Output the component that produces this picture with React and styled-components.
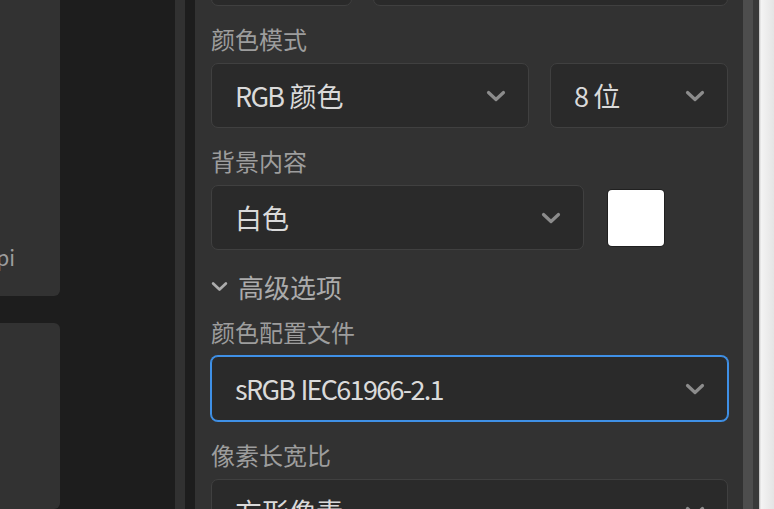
import React from "react";
import styled, { createGlobalStyle } from "styled-components";

const Global = createGlobalStyle`
  html, body { margin: 0; padding: 0; background: #1d1d1d; }
  body { font-family: "Noto Sans CJK SC", "Noto Sans", sans-serif; }
  #root { height: 509px; overflow: hidden; }
`;

const Screen = styled.div`
  display: flex;
  height: 509px;
  overflow: hidden;
  background: #1d1d1d;
`;

const LeftColumn = styled.div`
  width: 60px;
  flex-shrink: 0;
  display: flex;
  flex-direction: column;
  gap: 27px;
`;

const PreviewCard = styled.div`
  background: #323232;
  border-radius: 6px;
  margin-left: -10px;
  margin-top: ${(p) => (p.$first ? "-10px" : "0")};
  height: ${(p) => (p.$first ? "306px" : "auto")};
  flex: ${(p) => (p.$first ? "none" : "1")};
  display: flex;
  align-items: flex-end;
  justify-content: flex-end;
  padding: 0 45px 27px 0;
  box-sizing: border-box;
  overflow: hidden;
`;

const CardMeta = styled.span`
  font-size: 21px;
  line-height: 24px;
  color: #9c9c9c;
  white-space: nowrap;
`;

const Gutter = styled.div`
  width: 115px;
  flex-shrink: 0;
`;

const Divider = styled.div`
  width: 10px;
  flex-shrink: 0;
  background: #313131;
  margin-right: 10px;
`;

const Panel = styled.div`
  width: 548px;
  flex-shrink: 0;
  background: #323232;
  padding: 0 15px 0 16px;
  box-sizing: border-box;
  overflow: hidden;
`;

const ScrollTrack = styled.div`
  width: 10px;
  flex-shrink: 0;
  background: #4d4d4d;
`;

const EdgeStrip = styled.div`
  width: 6px;
  flex-shrink: 0;
  background: #393939;
`;

const WindowEdge = styled.div`
  flex: 1;
  background: linear-gradient(to right, #b8b8b8 0, #f4f4f4 2px, #e4e4e4 100%);
`;

const Form = styled.div`
  display: flex;
  flex-direction: column;
  margin-top: -59px;
`;

const Row = styled.div`
  display: grid;
  grid-template-columns: ${(p) => p.$cols};
  gap: ${(p) => p.$gap}px;
  align-items: center;
`;

const Field = styled.div`
  display: flex;
  flex-direction: column;
  gap: 6px;
  margin-top: ${(p) => p.$mt ?? 15}px;
`;

const Label = styled.div`
  font-size: 24px;
  line-height: 36px;
  color: #9d9d9d;
  white-space: nowrap;
`;

const SelectBox = styled.div`
  height: 65px;
  box-sizing: border-box;
  display: flex;
  align-items: center;
  justify-content: space-between;
  padding: 0 22px 0 23px;
  background: #2a2a2a;
  border: 1px solid ${(p) => (p.$focused ? "#3f90e6" : "#404040")};
  box-shadow: ${(p) => (p.$focused ? "0 0 0 1px #3f90e6" : "none")};
  border-radius: 7px;
  font-size: 27px;
  color: #dadada;
  white-space: pre;
`;

const Latin = styled.span`
  letter-spacing: -1.7px;
`;

const Swatch = styled.div`
  width: 56px;
  height: 56px;
  background: #ffffff;
  border-radius: 4px;
  box-shadow: 0 0 0 1px rgba(0, 0, 0, 0.35);
`;

const Toggle = styled.div`
  display: flex;
  align-items: center;
  gap: 10px;
  height: 30px;
  margin-top: 21px;
  margin-bottom: -3px;
  font-size: 26px;
  color: #ababab;
`;

const Chevron = ({ color = "#8c8c8c", w = 20, h = 12 }) => (
  <svg width={w} height={h} viewBox="0 0 20 12" fill="none">
    <path
      d="M2.5 2.5 L10 9.5 L17.5 2.5"
      stroke={color}
      strokeWidth="3.2"
      strokeLinecap="round"
      strokeLinejoin="round"
    />
  </svg>
);

const Select = ({ words = [], value, focused }) => (
  <SelectBox $focused={focused}>
    <span>
      {words.map((w, i) => (
        <React.Fragment key={i}>
          <Latin>{w}</Latin>{" "}
        </React.Fragment>
      ))}
      {value}
    </span>
    <Chevron />
  </SelectBox>
);

export default function App() {
  return (
    <>
      <Global />
      <Screen>
        <LeftColumn>
          <PreviewCard $first>
            <CardMeta>300 ppi</CardMeta>
          </PreviewCard>
          <PreviewCard />
        </LeftColumn>
        <Gutter />
        <Divider />
        <Panel>
          <Form>
            <Row $cols="141px 355px" $gap={21}>
              <Select />
              <Select />
            </Row>
            <Field>
              <Label>颜色模式</Label>
              <Row $cols="318px 178px" $gap={21}>
                <Select words={["RGB"]} value="颜色" />
                <Select words={["8"]} value="位" />
              </Row>
            </Field>
            <Field>
              <Label>背景内容</Label>
              <Row $cols="373px 56px" $gap={24}>
                <Select value="白色" />
                <Swatch />
              </Row>
            </Field>
            <Toggle>
              <Chevron color="#acacac" w={17} h={11} />
              <span>高级选项</span>
            </Toggle>
            <Field $mt={16}>
              <Label>颜色配置文件</Label>
              <Select words={["sRGB", "IEC61966-2.1"]} focused />
            </Field>
            <Field $mt={16}>
              <Label>像素长宽比</Label>
              <Select value="方形像素" />
            </Field>
          </Form>
        </Panel>
        <ScrollTrack />
        <EdgeStrip />
        <WindowEdge />
      </Screen>
    </>
  );
}
